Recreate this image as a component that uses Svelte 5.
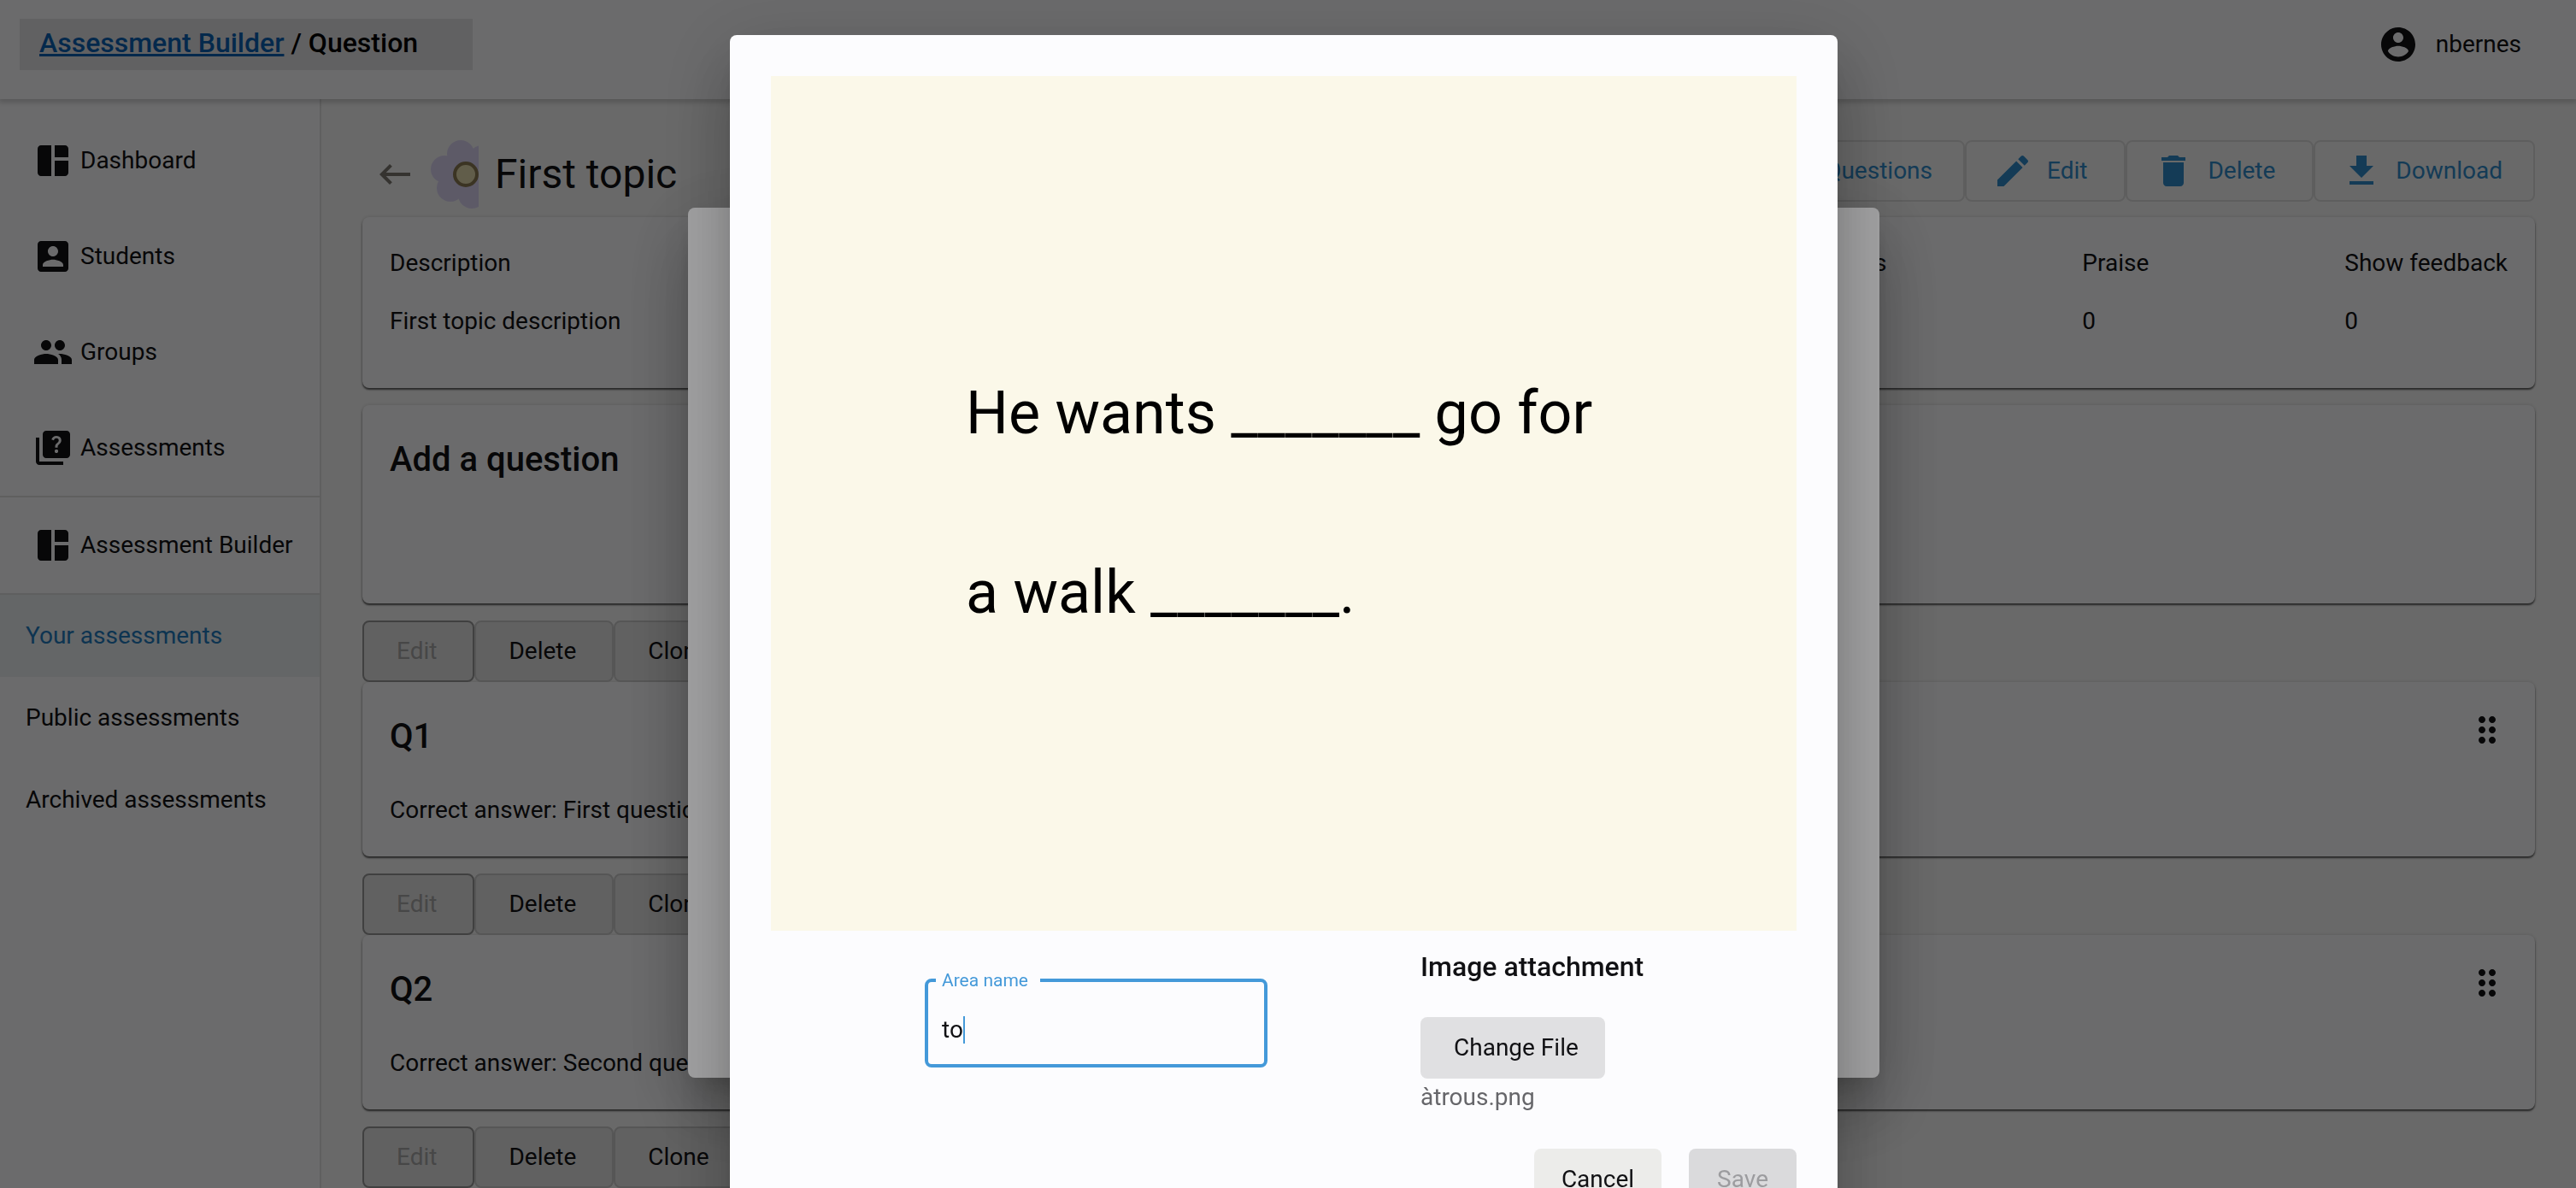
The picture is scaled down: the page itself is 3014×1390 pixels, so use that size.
<script>
  const paths = {
    dashboard: 'M5 21h6V3H5c-1.100 0-2 .9-2 2v14c0 1.100.9 2 2 2zm8 0h6c1.100 0 2-.9 2-2v-7h-8v9zm8-11V5c0-1.100-.9-2-2-2h-6v7h8z',
    students: 'M3 5v14c0 1.100.89 2 2 2h14c1.100 0 2-.9 2-2V5c0-1.100-.9-2-2-2H5c-1.110 0-2 .9-2 2zm12 4c0 1.660-1.340 3-3 3s-3-1.340-3-3 1.340-3 3-3 3 1.340 3 3zm-9 8c0-2 4-3.100 6-3.100s6 1.100 6 3.100v1H6v-1z',
    groups: 'M16 11c1.660 0 2.990-1.340 2.990-3S17.660 5 16 5s-3 1.340-3 3 1.340 3 3 3zm-8 0c1.660 0 2.990-1.340 2.990-3S9.660 5 8 5 5 6.340 5 8s1.340 3 3 3zm0 2c-2.330 0-7 1.170-7 3.500V19h14v-2.500C15 14.170 10.330 13 8 13zm8 0c-.29 0-.62.02-.97.05 1.160.84 1.970 1.970 1.970 3.450V19h6v-2.500c0-2.330-4.670-3.500-7-3.500z',
    quiz: 'M4 6H2v14c0 1.100.9 2 2 2h14v-2H4V6zm16-4H8c-1.100 0-2 .9-2 2v12c0 1.100.9 2 2 2h12c1.100 0 2-.9 2-2V4c0-1.100-.9-2-2-2zm-5.990 13c-.59 0-1.050-.47-1.050-1.050 0-.59.47-1.040 1.050-1.040.59 0 1.040.45 1.040 1.040-.01.58-.45 1.050-1.040 1.050zm2.500-6.170c-.63.93-1.230 1.210-1.560 1.810-.13.24-.18.4-.18 1.180h-1.520c0-.41-.06-1.080.26-1.650.41-.73 1.180-1.160 1.630-1.800.48-.68.21-1.940-1.140-1.940-.88 0-1.320.67-1.500 1.230l-1.370-.57C11.510 5.960 12.520 5 13.990 5c1.230 0 2.080.56 2.510 1.260.37.6.58 1.730.01 2.570z',
    account: 'M12 2C6.480 2 2 6.480 2 12s4.480 10 10 10 10-4.480 10-10S17.520 2 12 2zm0 3c1.660 0 3 1.340 3 3s-1.340 3-3 3-3-1.340-3-3 1.340-3 3-3zm0 14.200c-2.500 0-4.710-1.280-6-3.220.03-1.990 4-3.080 6-3.080 1.990 0 5.970 1.090 6 3.080-1.290 1.940-3.500 3.220-6 3.220z',
    back: 'M21 11H6.830l3.580-3.590L9 6l-6 6 6 6 1.410-1.410L6.830 13H21z',
    add: 'M19 13h-6v6h-2v-6H5v-2h6V5h2v6h6z',
    edit: 'M3 17.250V21h3.750L17.810 9.940l-3.750-3.750L3 17.250zM20.710 7.040c.39-.39.39-1.020 0-1.410l-2.340-2.340c-.39-.39-1.020-.39-1.410 0l-1.830 1.830 3.750 3.750 1.830-1.830z',
    trash: 'M6 19c0 1.100.9 2 2 2h8c1.100 0 2-.9 2-2V7H6v12zM19 4h-3.500l-1-1h-5l-1 1H5v2h14V4z',
    download: 'M19 9h-4V3H9v6H5l7 7 7-7zM5 18v2h14v-2H5z',
    drag: 'M11 18c0 1.100-.9 2-2 2s-2-.9-2-2 .9-2 2-2 2 .9 2 2zm-2-8c-1.100 0-2 .9-2 2s.9 2 2 2 2-.9 2-2-.9-2-2-2zm0-6c-1.100 0-2 .9-2 2s.9 2 2 2 2-.9 2-2-.9-2-2-2zm6 4c1.100 0 2-.9 2-2s-.9-2-2-2-2 .9-2 2 .9 2 2 2zm0 2c-1.100 0-2 .9-2 2s.9 2 2 2 2-.9 2-2-.9-2-2-2zm0 6c-1.100 0-2 .9-2 2s.9 2 2 2 2-.9 2-2-.9-2-2-2z'
  };
  const nav = [
    ['dashboard', 'Dashboard'],
    ['students', 'Students'],
    ['groups', 'Groups'],
    ['quiz', 'Assessments']
  ];
  const actions = [
    ['add', 'Questions', ''],
    ['edit', 'Edit', 'wide'],
    ['trash', 'Delete', 'wide'],
    ['download', 'Download', '']
  ];
  const questions = [
    ['Q1', 'Correct answer: First question'],
    ['Q2', 'Correct answer: Second question']
  ];
  let areaName = $state('to');
</script>

{#snippet icon(name)}
  <svg class="icon" viewBox="0 0 24 24" aria-hidden="true"><path d={paths[name]} /></svg>
{/snippet}

{#snippet tools()}
  <div class="tools">
    <button class="tool" disabled>Edit</button>
    <button class="tool">Delete</button>
    <button class="tool">Clone</button>
  </div>
{/snippet}

<div class="app">
  <header class="topbar">
    <div class="crumbs"><a href="#builder">Assessment Builder</a> / Question</div>
    <div class="user">{@render icon('account')}<span>nbernes</span></div>
  </header>
  <div class="body">
    <nav class="side">
      <div class="group first">
        {#each nav as [glyph, label]}
          <a class="item" href="#{glyph}">{@render icon(glyph)}{label}</a>
        {/each}
      </div>
      <div class="group">
        <a class="item" href="#builder">{@render icon('dashboard')}Assessment Builder</a>
      </div>
      <a class="sub active" href="#your">Your assessments</a>
      <a class="sub" href="#public">Public assessments</a>
      <a class="sub" href="#archived">Archived assessments</a>
    </nav>
    <main>
      <div class="heading">
        <button class="back" aria-label="Back">{@render icon('back')}</button>
        <svg class="flower" viewBox="0 0 56 80" aria-hidden="true">
          <g class="petals">
            <circle cx="35" cy="16" r="16" />
            <circle cx="16" cy="34" r="16" />
            <circle cx="23" cy="56" r="16" />
            <circle cx="48" cy="64" r="16" />
            <circle cx="60" cy="22" r="16" />
            <circle cx="40" cy="40" r="22" />
          </g>
          <circle class="heart" cx="41" cy="40" r="13" />
        </svg>
        <h1>First topic</h1>
        <div class="actions">
          {#each actions as [glyph, label, size]}
            <button class="action {size}">{@render icon(glyph)}{label}</button>
          {/each}
        </div>
      </div>
      <section class="card info">
        <dl class="lead"><dt>Description</dt><dd>First topic description</dd></dl>
        <dl><dt>Attempts</dt><dd>0</dd></dl>
        <dl><dt>Praise</dt><dd>0</dd></dl>
        <dl><dt>Show feedback</dt><dd>0</dd></dl>
      </section>
      <section class="card adder"><h2>Add a question</h2></section>
      {#each questions as [title, answer]}
        {@render tools()}
        <section class="card question">
          <div>
            <h2>{title}</h2>
            <p>{answer}</p>
          </div>
          {@render icon('drag')}
        </section>
      {/each}
      {@render tools()}
    </main>
  </div>
</div>

<div class="scrim"><div class="sheet"></div></div>
<div class="scrim">
  <div class="modal" role="dialog" aria-label="Edit area">
    <div class="picture">
      <p>He wants _______ go for<br />a walk _______.</p>
    </div>
    <div class="fields">
      <fieldset class="field">
        <legend><label for="area">Area name</label></legend>
        <div class="entry">
          <input id="area" type="text" bind:value={areaName} />
          <span class="caret"></span>
        </div>
      </fieldset>
      <div class="attach">
        <h3>Image attachment</h3>
        <button class="file">Change File</button>
        <p>àtrous.png</p>
      </div>
    </div>
    <div class="foot">
      <button class="cancel">Cancel</button>
      <button class="save" disabled>Save</button>
    </div>
  </div>
</div>

<style>
  :global(body) {
    margin: 0;
    overflow: hidden;
    background: #f8f8f8;
  }
  :global(#app) {
    font: 28px/40px Roboto, sans-serif;
    color: #111114;
  }
  h1, h2, h3, p, dl, dd {
    margin: 0;
  }
  a {
    color: inherit;
    text-decoration: none;
  }
  button {
    font: inherit;
    color: inherit;
    box-sizing: border-box;
    height: 72px;
    border: 0;
    border-radius: 8px;
  }
  .icon {
    width: 48px;
    height: 48px;
    flex: none;
    fill: currentColor;
  }
  .app {
    height: 100vh;
    display: flex;
    flex-direction: column;
    overflow: hidden;
  }
  .topbar {
    flex: none;
    height: 116px;
    box-sizing: border-box;
    padding: 22px 64px 34px 23px;
    display: flex;
    justify-content: space-between;
    background: #fdfdff;
    box-shadow: 0 2px 6px 2px rgba(0, 0, 0, 0.18);
    z-index: 1;
  }
  .crumbs {
    width: 530px;
    height: 60px;
    box-sizing: border-box;
    padding: 8px 23px;
    background: #e6e6e8;
    font-size: 32px;
    font-weight: 500;
    color: #000;
  }
  .crumbs a {
    color: #0b62b4;
    text-decoration: underline;
  }
  .user {
    display: flex;
    align-items: center;
    gap: 20px;
  }
  .body {
    flex: 1;
    min-height: 0;
    display: flex;
  }
  .side {
    flex: none;
    width: 374px;
    background: #fdfdff;
    border-right: 2px solid #e0e0e0;
  }
  .group {
    border-bottom: 2px solid #e0e0e0;
  }
  .first {
    padding-top: 16px;
  }
  .item {
    display: flex;
    align-items: center;
    gap: 8px;
    height: 112px;
    padding-left: 38px;
  }
  .sub {
    display: flex;
    align-items: center;
    height: 96px;
    padding-left: 30px;
  }
  .active {
    background: #ecf0f3;
    color: #1f7cc0;
  }
  main {
    flex: 1;
    min-width: 0;
    padding: 48px 48px 0;
  }
  .heading {
    display: flex;
    height: 90px;
  }
  .back {
    width: 80px;
    padding: 16px 0 0 14px;
    background: none;
    color: #7d7a72;
    text-align: left;
  }
  .flower {
    width: 56px;
    height: 80px;
    flex: none;
  }
  .petals {
    fill: #dcd5f4;
  }
  .heart {
    fill: #e6dcb0;
    stroke: #8c7b54;
    stroke-width: 4px;
  }
  h1 {
    margin-left: 19px;
    font-size: 48px;
    line-height: 80px;
    font-weight: 400;
  }
  .actions {
    margin-left: auto;
    display: flex;
  }
  .action {
    display: flex;
    align-items: center;
    gap: 16px;
    padding: 0 36px 0 30px;
    border: 2px solid #dedede;
    background: none;
    color: #2f8ccc;
  }
  .wide {
    padding-right: 43px;
  }
  .card {
    box-sizing: border-box;
    padding: 32px;
    background: #fdfdff;
    border-radius: 8px;
    box-shadow: 0 2px 2px rgba(0, 0, 0, 0.6), 0 0 4px rgba(0, 0, 0, 0.14);
    margin-bottom: 20px;
  }
  .info {
    display: flex;
    gap: 229px;
    height: 200px;
    padding-top: 34px;
  }
  .lead {
    margin-right: auto;
  }
  dd {
    margin-top: 28px;
  }
  .adder {
    height: 232px;
  }
  .tools {
    display: flex;
  }
  .tool {
    padding: 0 42px 0 38px;
    border: 2px solid #cacaca;
    background: #e6e6e6;
  }
  .tool:disabled {
    border-color: #989898;
    color: #a8a8a8;
  }
  h2 {
    font-size: 40px;
    line-height: 64px;
    font-weight: 500;
  }
  .question {
    display: flex;
    justify-content: space-between;
    height: 204px;
  }
  .question p {
    margin-top: 34px;
  }
  .scrim {
    position: fixed;
    inset: 0;
    box-sizing: border-box;
    padding-right: 10px;
    display: flex;
    justify-content: center;
    align-items: flex-start;
    background: rgba(0, 0, 0, 0.35);
    z-index: 2;
  }
  .sheet {
    width: 1394px;
    height: 1018px;
    margin-top: 243px;
    border-radius: 8px;
    background: #fdfdff;
    box-shadow: 0 22px 30px -14px rgba(0, 0, 0, 0.2), 0 48px 76px 6px rgba(0, 0, 0, 0.14), 0 18px 92px 16px rgba(0, 0, 0, 0.12);
  }
  .modal {
    box-sizing: border-box;
    width: 1296px;
    margin-top: 41px;
    padding: 48px;
    border-radius: 8px;
    background: #fcfcfe;
    box-shadow: 0 22px 30px -14px rgba(0, 0, 0, 0.2), 0 48px 76px 6px rgba(0, 0, 0, 0.14), 0 18px 92px 16px rgba(0, 0, 0, 0.12);
  }
  .picture {
    height: 1000px;
    box-sizing: border-box;
    padding: 289px 228px;
    background: #fbf8e9;
    font-size: 70px;
    line-height: 210px;
    color: #000;
    white-space: nowrap;
  }
  .fields {
    display: flex;
    justify-content: space-between;
    padding: 20px 160px 0 180px;
  }
  .field {
    box-sizing: border-box;
    width: 401px;
    height: 114px;
    margin: 26px 0 0;
    padding: 0 16px;
    border: 4px solid #4499d9;
    border-radius: 8px;
  }
  legend {
    margin-left: -7px;
    padding: 0 14px 0 7px;
    font-size: 21px;
    line-height: 24px;
    color: #4499d9;
  }
  .entry {
    display: flex;
    align-items: center;
    height: 92px;
  }
  input {
    field-sizing: content;
    padding: 0;
    border: 0;
    outline: 0;
    background: none;
    font: inherit;
    color: inherit;
  }
  .caret {
    width: 2px;
    height: 32px;
    background: #4499d9;
  }
  .attach {
    width: 280px;
  }
  h3 {
    font-size: 32px;
    line-height: 44px;
    font-weight: 500;
  }
  .file {
    margin-top: 37px;
    padding: 0 31px 0 39px;
    background: #e0e0e2;
  }
  .attach p {
    margin-top: 2px;
    color: #66666a;
  }
  .foot {
    display: flex;
    justify-content: flex-end;
    gap: 32px;
    margin-top: 40px;
  }
  .cancel {
    padding: 0 32px;
    background: #ececea;
  }
  .save {
    padding: 0 33px;
    background: #dadadc;
    color: #9c9c9f;
  }
</style>
